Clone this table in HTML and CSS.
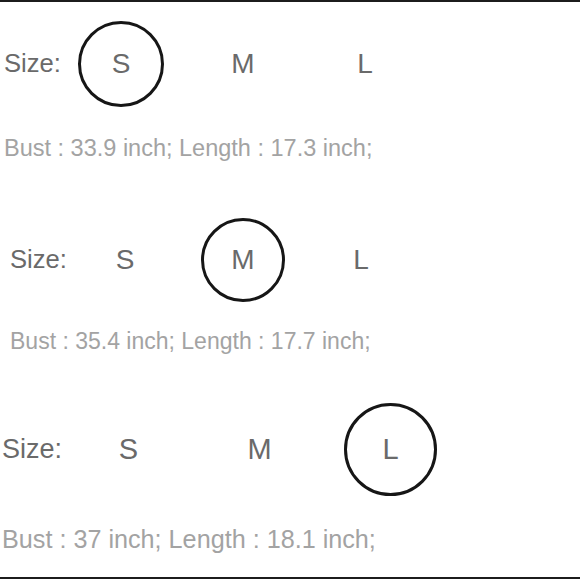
FILE: index.html
```html
<!DOCTYPE html>
<html>
<head>
<meta charset="utf-8">
<link rel="stylesheet" href="styles.css">
</head>
<body>
<div class="frame">
  <section class="block block-1">
    <div class="size-row">
      <span class="label">Size:</span>
      <span class="opt"><span class="ring">S</span></span>
      <span class="opt">M</span>
      <span class="opt">L</span>
    </div>
    <p class="measure">Bust : 33.9 inch; Length : 17.3 inch;</p>
  </section>
  <section class="block block-2">
    <div class="size-row">
      <span class="label">Size:</span>
      <span class="opt">S</span>
      <span class="opt"><span class="ring">M</span></span>
      <span class="opt">L</span>
    </div>
    <p class="measure">Bust : 35.4 inch; Length : 17.7 inch;</p>
  </section>
  <section class="block block-3">
    <div class="size-row">
      <span class="label">Size:</span>
      <span class="opt">S</span>
      <span class="opt">M</span>
      <span class="opt"><span class="ring">L</span></span>
    </div>
    <p class="measure">Bust : 37 inch; Length : 18.1 inch;</p>
  </section>
</div>
</body>
</html>
```

FILE: styles.css
```css
html, body {
  margin: 0;
  padding: 0;
  background: #ffffff;
}

body {
  font-family: "Liberation Sans", Arial, Helvetica, sans-serif;
  width: 580px;
  height: 580px;
  overflow: hidden;
}

.frame {
  box-sizing: border-box;
  height: 579px;
  border-top: 2px solid #1c1c1c;
  border-bottom: 2px solid #1c1c1c;
  display: flex;
  flex-direction: column;
}

.block {
  display: flex;
  flex-direction: column;
}

.size-row {
  display: flex;
  align-items: center;
  color: #6a6a6a;
  line-height: 1;
}

.label {
  flex: none;
}

.opt {
  flex: none;
  display: flex;
  align-items: center;
  justify-content: center;
}

.ring {
  box-sizing: border-box;
  flex: none;
  display: flex;
  align-items: center;
  justify-content: center;
  border: 3px solid #161616;
  border-radius: 50%;
}

.measure {
  margin: 0;
  color: #a3a3a3;
  line-height: 1;
  white-space: nowrap;
}

/* block 1 */
.block-1 .size-row {
  margin-top: 19px;
  height: 86px;
  padding-left: 4px;
  font-size: 28px;
}
.block-1 .label { width: 56px; font-size: 25.6px; }
.block-1 .opt { width: 122px; }
.block-1 .ring { width: 86px; height: 86px; }
.block-1 .measure {
  margin-top: 30px;
  padding-left: 4px;
  font-size: 23.5px;
}

/* block 2 */
.block-2 .size-row {
  margin-top: 57px;
  height: 84px;
  padding-left: 10px;
  font-size: 28px;
}
.block-2 .label { width: 56px; font-size: 25.6px; }
.block-2 .opt { width: 118px; }
.block-2 .ring { width: 84px; height: 84px; }
.block-2 .measure {
  margin-top: 28px;
  padding-left: 10px;
  font-size: 23px;
}

/* block 3 */
.block-3 .size-row {
  margin-top: 50px;
  height: 93px;
  padding-left: 2px;
  font-size: 29px;
}
.block-3 .label { width: 61px; font-size: 27px; }
.block-3 .opt { width: 131px; }
.block-3 .ring { width: 93px; height: 93px; }
.block-3 .measure {
  margin-top: 31px;
  padding-left: 2px;
  font-size: 25.2px;
}
```
